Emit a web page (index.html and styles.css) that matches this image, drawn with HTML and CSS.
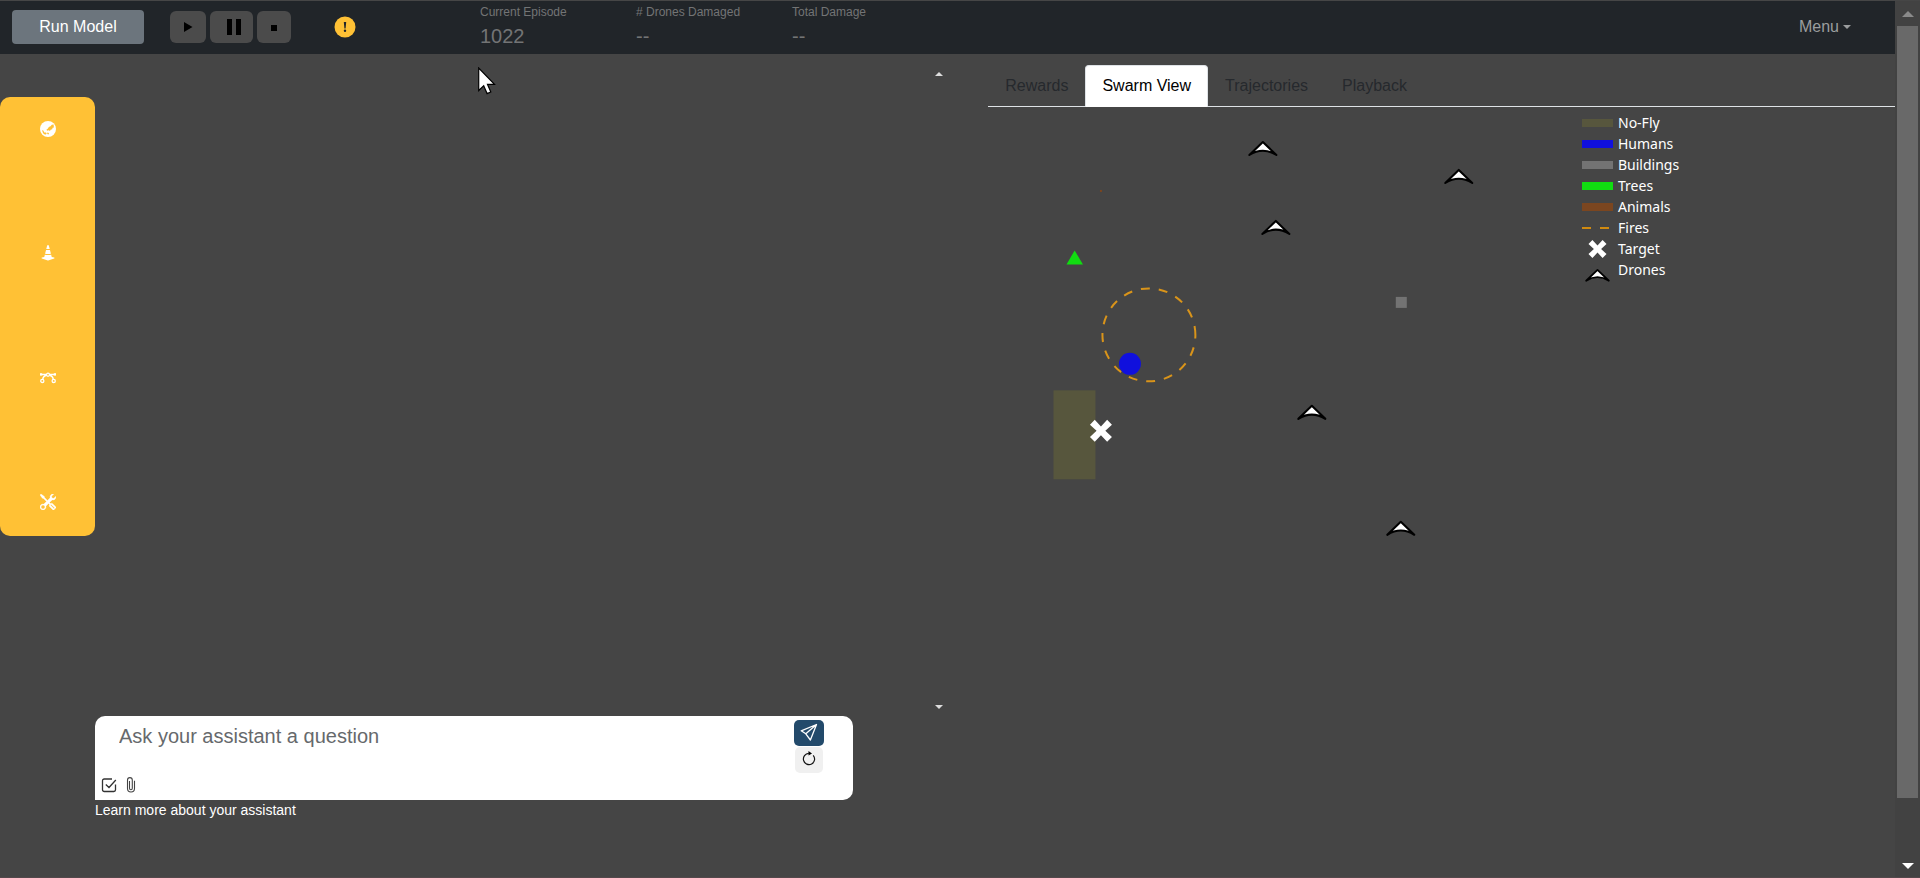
FILE: index.html
```html
<!DOCTYPE html>
<html lang="en">
<head>
<meta charset="utf-8">
<title>Swarm View</title>
<link rel="stylesheet" href="styles.css">
</head>
<body>
<svg class="defs" width="0" height="0" aria-hidden="true">
  <defs>
    <path id="drone" d="M-13.500 14 L0 1 L13.500 14 Q0 5.500 -13.500 14 Z" fill="#fff" stroke="#000" stroke-width="2.100" stroke-linejoin="round"/>
    <path id="cross" d="M0 -4.400 L6.200 -11 L11 -6.200 L4.400 0 L11 6.200 L6.200 11 L0 4.400 L-6.200 11 L-11 6.200 L-4.400 0 L-11 -6.200 L-6.200 -11 Z" fill="#fff"/>
  </defs>
</svg>
<div class="page">
  <header class="topbar">
    <button class="run" type="button">Run Model</button>
    <div class="transport">
      <button class="play" type="button" aria-label="Play"><svg width="10" height="12" viewBox="0 0 10 12"><path d="M1 1l8.500 5L1 11z"/></svg></button>
      <button class="pause" type="button" aria-label="Pause"><svg width="14" height="16" viewBox="0 0 14 16"><path d="M0 0h5v16H0zM9 0h5v16H9z"/></svg></button>
      <button class="stop" type="button" aria-label="Stop"><svg width="6" height="6" viewBox="0 0 6 6"><path d="M0 0h6v6H0z"/></svg></button>
    </div>
    <svg class="warning" width="22" height="22" viewBox="0 0 22 22"><circle cx="11" cy="11" r="10.500" fill="#ffc135"/><path d="M9.800 6h2.400l-.6 6.500h-1.200z" fill="#212529"/><circle cx="11" cy="14.800" r="1.200" fill="#212529"/></svg>
    <dl class="metrics">
      <div><dt>Current Episode</dt><dd>1022</dd></div>
      <div><dt># Drones Damaged</dt><dd>--</dd></div>
      <div><dt>Total Damage</dt><dd>--</dd></div>
    </dl>
    <button class="menu" type="button">Menu</button>
  </header>
  <main class="workspace">
    <section class="left">
      <nav class="rail">
        <a href="#world" aria-label="World"><svg width="16" height="16" viewBox="0 0 16 16"><circle cx="8" cy="8" r="8"/><path class="land" d="M13.600 3.600l-1.800.2-1.300 1.500-1.600.6-1.200 1.900-1.300 1 .8 1 1.500-.6 1.300.8.600-1.300 1.600-.5.400-1.400 1.300-.4zM2 9.300l1.300.3 1 1.800 1.700.2.700 1.200-1.600.9-2-1.400zM7.300 11.500l1.700.6-.4 1.500-1.400-.5z"/></svg></a>
        <a href="#hazards" aria-label="Hazards"><svg width="16" height="16" viewBox="0 0 16 16"><path d="m9.970 4.880.953 3.811C10.159 8.878 9.140 9 8 9c-1.140 0-2.158-.122-2.923-.309L6.030 4.880C6.635 4.957 7.300 5 8 5s1.365-.043 1.970-.12zm-.245-.978L8.970.88C8.718-.13 7.282-.13 7.030.88L6.275 3.900C6.800 3.965 7.382 4 8 4c.618 0 1.200-.036 1.725-.098zm4.396 8.613a.5.5 0 0 1 .037.96l-6 2a.5.5 0 0 1-.316 0l-6-2a.5.5 0 0 1 .037-.96l2.391-.598.565-2.257c.862.212 1.964.339 3.165.339s2.303-.127 3.165-.339l.565 2.257 2.391.598z"/></svg></a>
        <a href="#paths" aria-label="Paths"><svg width="16" height="16" viewBox="0 0 16 16"><g fill="none" stroke="#fff" stroke-width="1.300"><circle cx="8" cy="4.700" r="1.500"/><circle cx="2.300" cy="10.900" r="1.600"/><circle cx="13.700" cy="10.900" r="1.600"/><path d="M0 4.500h6.500M9.500 4.500H16M6.500 5.200Q3 6.500 2.700 9.200M9.500 5.200Q13 6.500 13.300 9.200"/></g><path d="M0 3.300h2.200v2.200H0zM13.800 3.300H16v2.200h-2.200z"/></svg></a>
        <a href="#tools" aria-label="Tools"><svg width="16" height="16" viewBox="0 0 16 16"><path stroke="#fff" stroke-width=".3" d="M1 0 0 1l2.200 3.081a1 1 0 0 0 .815.419h.07a1 1 0 0 1 .708.293l2.675 2.675-2.617 2.654A3.003 3.003 0 0 0 0 13a3 3 0 1 0 5.878-.851l2.654-2.617.968.968-.305.914a1 1 0 0 0 .242 1.023l3.270 3.270a.997.997 0 0 0 1.414 0l1.586-1.586a.997.997 0 0 0 0-1.414l-3.270-3.270a1 1 0 0 0-1.023-.242L10.500 9.500l-.96-.96 2.680-2.643A3.005 3.005 0 0 0 16 3c0-.269-.035-.53-.102-.777l-2.140 2.141L12 4l-.364-1.757L13.777.102a3 3 0 0 0-3.675 3.680L7.462 6.460 4.793 3.793a1 1 0 0 1-.293-.707v-.071a1 1 0 0 0-.419-.814L1 0Zm9.646 10.646a.5.5 0 0 1 .708 0l2.914 2.915a.5.5 0 0 1-.707.707l-2.915-2.914a.5.5 0 0 1 0-.708ZM3 11l.471.242.529.026.287.445.445.287.026.529L5 13l-.242.471-.026.529-.445.287-.287.445-.529.026L3 15l-.471-.242L2 14.732l-.287-.445L1.268 14l-.026-.529L1 13l.242-.471.026-.529.445-.287.287-.445.529-.026L3 11Z"/></svg></a>
      </nav>
      <div class="assistant">
        <form class="ask">
          <input class="question" type="text" placeholder="Ask your assistant a question" aria-label="Ask your assistant a question">
          <div class="actions">
            <button class="send" type="button" aria-label="Send"><svg width="18" height="18" viewBox="0 0 18 18" fill="none" stroke="#fff" stroke-width="1.300" stroke-linejoin="round"><path d="M16.500 1.500L1.200 7.800l4.600 3 4.600 6.200zM16.500 1.500L5.800 10.800"/></svg></button>
            <button class="reset" type="button" aria-label="Start over"><svg width="16" height="16" viewBox="0 0 16 16"><path d="M12.200 4.300a5.600 5.600 0 1 1-4.400-1.900" fill="none" stroke="#111" stroke-width="1.200"/><path d="M7.500 0l3.500 2.400-3.500 2.200z"/></svg></button>
          </div>
          <div class="extras">
            <button type="button" aria-label="Tasks"><svg width="16" height="16" viewBox="0 0 16 16" fill="none" stroke="#333" stroke-width="1.300"><path d="M11 2H3.200A1.700 1.700 0 0 0 1.500 3.700v9.100a1.700 1.700 0 0 0 1.700 1.700h9.600a1.700 1.700 0 0 0 1.700-1.700V7.500M4.800 7.500l3.200 3 6.800-7.500"/></svg></button>
            <button type="button" aria-label="Attach"><svg width="16" height="16" viewBox="0 0 16 16" fill="none" stroke="#444" stroke-width="1.100"><path d="M4.500 4v7.500a3.500 3.500 0 0 0 7 0V3.800M4.500 4V3a2.400 2.400 0 0 1 4.800 0v8.300a1.400 1.400 0 0 1-2.800 0V4"/></svg></button>
          </div>
        </form>
        <a class="learn" href="#learn">Learn more about your assistant</a>
      </div>
      <div class="scroller" aria-hidden="true"><i class="tip up"></i><i class="tip down"></i></div>
    </section>
    <section class="right">
      <nav class="tabs">
        <a href="#rewards">Rewards</a>
        <a class="active" href="#swarm">Swarm View</a>
        <a href="#trajectories">Trajectories</a>
        <a href="#playback">Playback</a>
      </nav>
      <div class="chart">
        <svg class="plot" viewBox="0 0 594 480">
          <rect x="65.500" y="283.500" width="42" height="89" fill="#57563d"/>
          <path d="M207.500 228 A46.500 46.500 0 0 0 114.500 228 A46.500 46.500 0 0 0 207.500 228" fill="none" stroke="#d9941a" stroke-width="2" stroke-dasharray="9 9"/>
          <circle cx="142" cy="257" r="11" fill="#1010dd"/>
          <path d="M86.700 143.500 L95 157.500 H78.500 Z" fill="#11dd11"/>
          <rect x="408" y="190" width="11" height="11" fill="#737373"/>
          <use href="#cross" x="113" y="324"/>
          <rect x="112" y="83" width="2" height="2" fill="#7b4620"/>
          <use href="#drone" x="275" y="34"/>
          <use href="#drone" x="471" y="62"/>
          <use href="#drone" x="288" y="113"/>
          <use href="#drone" x="324" y="298"/>
          <use href="#drone" x="413" y="414"/>
        </svg>
        <ul class="legend">
          <li><i class="swatch nofly"></i>No-Fly</li>
          <li><i class="swatch humans"></i>Humans</li>
          <li><i class="swatch buildings"></i>Buildings</li>
          <li><i class="swatch trees"></i>Trees</li>
          <li><i class="swatch animals"></i>Animals</li>
          <li><svg width="31" height="21" viewBox="0 0 31 21"><path d="M0 11h31" stroke="#d08a10" stroke-width="2" stroke-dasharray="9 9"/></svg>Fires</li>
          <li><svg width="31" height="21" viewBox="0 0 31 21"><use href="#cross" transform="translate(15.500 11) scale(.82)"/></svg>Target</li>
          <li><svg class="low" width="31" height="21" viewBox="0 0 31 21"><use href="#drone" transform="translate(15.500 10) scale(.84)"/></svg>Drones</li>
        </ul>
      </div>
    </section>
  </main>
</div>
<div class="scrollbar" aria-hidden="true"><i class="arrow up"></i><i class="thumb"></i><i class="arrow down"></i></div>
<svg class="cursor" width="18" height="28" viewBox="0 0 18 28" aria-hidden="true"><path d="M.7 1v22.500l5-4.700 3.400 7.800 3.700-1.600-3.300-7.600h7z" fill="#fff" stroke="#000" stroke-width="1.200"/></svg>
</body>
</html>
```
FILE: styles.css
```css
* { box-sizing: border-box; }

body {
  margin: 0;
  display: flex;
  min-height: 100vh;
  background: #454545;
  border-top: 1px solid #464646;
  border-bottom: 1px solid #53484b;
  font: 16px/24px "Liberation Sans", Arial, sans-serif;
}

button { border: 0; padding: 0; font: inherit; }
svg { display: block; flex: none; }
.defs { position: absolute; }

.page {
  flex: 1;
  min-width: 0;
  display: flex;
  flex-direction: column;
}

/* Top bar */
.topbar {
  display: flex;
  align-items: center;
  height: 53px;
  padding: 0 44px 2px 12px;
  background: #212529;
}

.run {
  width: 132px;
  height: 34px;
  border-radius: 4px;
  background: #6c757d;
  color: #fff;
}

.transport {
  display: flex;
  gap: 4px;
  margin-left: 26px;
}

.transport button {
  display: flex;
  align-items: center;
  justify-content: center;
  height: 32px;
  border-radius: 6px;
  background: #4b4b4b;
}

.play { width: 36px; }
.transport .pause { width: 43px; padding-left: 5px; }
.transport .stop { width: 34px; padding-top: 2px; }
.warning { margin-left: 43px; }

.metrics {
  display: flex;
  align-self: stretch;
  margin: 0 0 0 124px;
  color: #737475;
}

.metrics div { width: 156px; padding-top: 2px; }
.metrics dt { font-size: 12px; line-height: 18px; }
.metrics dd { margin: 0; font-size: 20px; line-height: 30px; }

.menu {
  display: flex;
  align-items: center;
  gap: 4px;
  margin-left: auto;
  background: none;
  color: #9b9d9e;
}

.menu::after {
  content: "";
  border: 4px solid transparent;
  border-top-color: currentColor;
  border-bottom: 0;
}

/* Workspace */
.workspace {
  flex: 1;
  display: grid;
  grid-template-columns: minmax(0, 109fr) minmax(0, 100fr);
}

.left { display: flex; }

.rail {
  display: flex;
  flex-direction: column;
  justify-content: space-between;
  align-items: center;
  align-self: flex-start;
  width: 95px;
  height: 439px;
  margin-top: 43px;
  padding: 24px 0 26px;
  border-radius: 10px;
  background: #ffc135;
}

.rail svg { fill: #fff; }
.rail .land { fill: #ffc135; }

.assistant {
  flex: 1;
  display: flex;
  flex-direction: column;
  justify-content: flex-end;
  align-items: stretch;
  padding-bottom: 57px;
}

.ask {
  display: grid;
  grid-template-columns: 1fr auto;
  grid-template-rows: 54px 30px;
  padding: 0 29px 0 6px;
  border-radius: 10px 10px 10px 0;
  background: #fff;
}

.question {
  align-self: start;
  height: 30px;
  margin-top: 5px;
  padding: 0 0 0 18px;
  border: 0;
  outline: 0;
  background: none;
  font: 20px/30px "Liberation Sans", Arial, sans-serif;
}

.question::placeholder { color: #66696c; opacity: 1; }

.actions {
  display: flex;
  flex-direction: column;
  align-items: center;
  gap: 1px;
  grid-row: span 2;
  padding-top: 4px;
}

.actions button {
  display: flex;
  align-items: center;
  justify-content: center;
  width: 28px;
  height: 26px;
  padding-bottom: 2px;
  border-radius: 5px;
  background: #f0f0f0;
}

.actions .send { width: 30px; background: #234a6b; }
.extras { display: flex; gap: 6px; padding-top: 7px; }
.extras button { height: 16px; background: none; }

.learn {
  align-self: flex-start;
  color: #fff;
  font-size: 14px;
  line-height: 20px;
  text-decoration: none;
}

.scroller {
  display: flex;
  flex-direction: column;
  justify-content: space-between;
  margin: 0 45px 0 82px;
  padding: 18px 0 168px;
}

.tip {
  border: 4px solid transparent;
}

.tip.up { border-top: 0; border-bottom-color: #ddd; }
.tip.down { border-bottom: 0; border-top-color: #ddd; }

/* Swarm view */
.right { padding-top: 11px; }

.tabs {
  display: flex;
  border-bottom: 1px solid #dee2e6;
}

.tabs a {
  margin-bottom: -1px;
  padding: 8px 16px;
  border: 1px solid transparent;
  border-radius: 4px 4px 0 0;
  color: #26292d;
  text-decoration: none;
}

.tabs .active {
  border-color: #dee2e6 #dee2e6 #fff;
  background: #fff;
  color: #000;
}

.chart { display: flex; align-items: flex-start; }
.plot { flex: 1; min-width: 0; }

.legend {
  width: 313px;
  margin: 0;
  padding: 5px 0 0;
  list-style: none;
  color: #fff;
  font: 14px/21px "Noto Sans", sans-serif;
}

.legend li { display: flex; align-items: center; gap: 5px; }
.legend .low { overflow: visible; }
.swatch { width: 31px; height: 8px; }
.nofly { background: #57563d; }
.humans { background: #1010dd; }
.buildings { background: #737373; }
.trees { background: #11dd11; }
.animals { background: #7b4620; }

/* Window scrollbar */
.scrollbar {
  display: flex;
  flex-direction: column;
  align-items: center;
  width: 25px;
  padding: 10px 0 8px;
  background: #424242;
}

.arrow { border: 6px solid transparent; }
.arrow.up { border-top: 0; border-bottom-color: #8a8a8a; }
.arrow.down { border-bottom: 0; border-top-color: #fff; }

.thumb {
  flex: 1;
  width: 21px;
  margin: 9px 0 65px;
  background: #696969;
}

.cursor {
  position: absolute;
  left: 478px;
  top: 67px;
}
```
